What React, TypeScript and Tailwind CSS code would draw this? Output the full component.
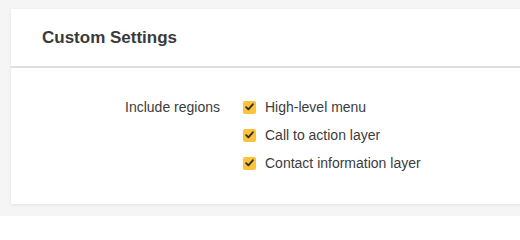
import React from "react";

function Check() {
  return (
    <span className="flex h-[13px] w-[13px] items-center justify-center rounded-[2px] bg-[#fbc23a]">
      <svg width="9" height="8" viewBox="0 0 9 8" fill="none">
        <path d="M1.2 4.2 L3.4 6.3 L7.8 1.3" stroke="#2b2b2b" strokeWidth="1.8" strokeLinecap="round" strokeLinejoin="round" />
      </svg>
    </span>
  );
}

export default function App() {
  const items = ["High-level menu", "Call to action layer", "Contact information layer"];
  return (
    <div className="h-[216px] w-[520px] overflow-hidden bg-[#f5f5f5] pl-[11px] pt-[9px] font-['Liberation_Sans',Arial,sans-serif]">
      <div className="h-[195px] w-[520px] bg-white shadow-[0_1px_3px_rgba(0,0,0,0.08)]">
        <div className="flex h-[59px] items-center border-b-2 border-[#dedede] pl-[31px]">
          <h2 className="text-[17px] font-bold leading-none text-[#3a3a3a]">Custom Settings</h2>
        </div>
        <div className="flex pt-[30px]">
          <div className="w-[209px] text-right text-[14px] leading-[18px] text-[#3c3c3c]">Include regions</div>
          <div className="ml-[23px] flex flex-col gap-[10px]">
            {items.map((t) => (
              <label key={t} className="flex h-[18px] items-center gap-[9px] text-[14px] leading-[18px] text-[#3c3c3c]">
                <Check />
                <span>{t}</span>
              </label>
            ))}
          </div>
        </div>
      </div>
    </div>
  );
}
